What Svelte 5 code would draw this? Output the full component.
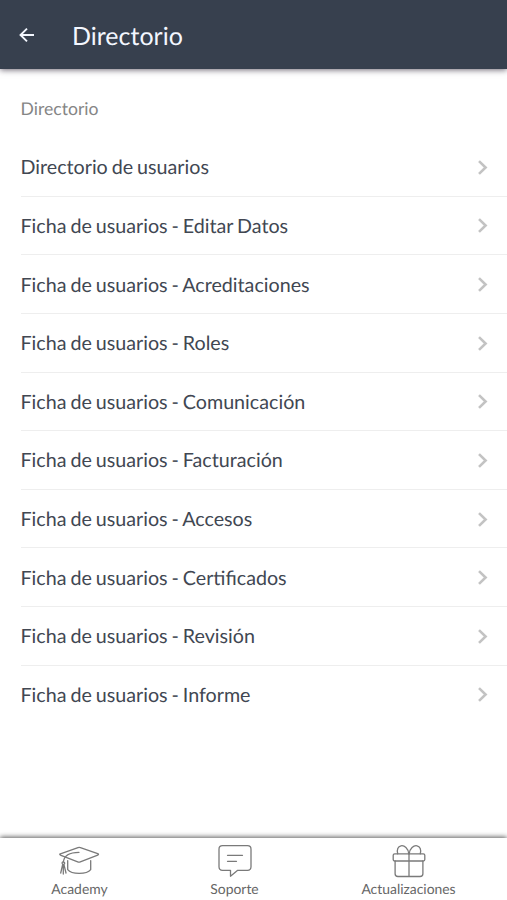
<script>
  const items = [
    'Directorio de usuarios',
    'Ficha de usuarios - Editar Datos',
    'Ficha de usuarios - Acreditaciones',
    'Ficha de usuarios - Roles',
    'Ficha de usuarios - Comunicación',
    'Ficha de usuarios - Facturación',
    'Ficha de usuarios - Accesos',
    'Ficha de usuarios - Certificados',
    'Ficha de usuarios - Revisión',
    'Ficha de usuarios - Informe'
  ];
</script>

<div class="app">
  <header>
    <svg class="back" width="16" height="16" viewBox="0 0 16 16" aria-hidden="true">
      <path d="M15 8H1.6M8 1.6L1.5 8l6.5 6.4" />
    </svg>
    <h1>Directorio</h1>
  </header>

  <main>
    <h2>Directorio</h2>
    <ul>
      {#each items as item}
        <li>
          <span>{item}</span>
          <svg class="chevron" width="12" height="16" viewBox="0 0 12 16" aria-hidden="true">
            <path d="M2 2.1L8.600 8.500 2 14.900" />
          </svg>
        </li>
      {/each}
    </ul>
  </main>

  <nav>
    <a href="#academy">
      <svg width="42" height="34" viewBox="0 0 42 34" aria-hidden="true">
        <path d="M1.700 10.200L20 3.600q1.200-.4 2.400 0L39.700 9.600q1.600.7 0 1.600L22.300 17.900q-1.300.5-2.600 0L3 11.400q-1.500-.7-1.300-1.200z" />
        <path d="M21 8.300C13 8.400 6.200 11 5.300 17.800M9.700 16.600v9c4 5 19 5 23 0v-9" />
        <path d="M5.300 17.800c-1.500.1-1.700 2-.3 2.500h.9c1.300-.6.900-2.500-.6-2.500zM4.700 20.400L2.700 29M5.300 20.400V30M5.900 20.400L8 29" />
      </svg>
      <span>Academy</span>
    </a>
    <a href="#soporte">
      <svg width="42" height="34" viewBox="0 0 42 34" aria-hidden="true">
        <path d="M8.500 1.700h25q3.500 0 3.500 3.500v17.600q0 3.500-3.500 3.500H23.700l-7.200 5.900v-5.900h-8Q5 26.300 5 22.800V5.200q0-3.500 3.500-3.500z" />
        <path d="M13.500 11.300h15M13.500 17.300h9" />
      </svg>
      <span>Soporte</span>
    </a>
    <a href="#actualizaciones">
      <svg width="42" height="34" viewBox="0 0 42 34" aria-hidden="true">
        <rect x="5.200" y="9.800" width="31.600" height="7.200" rx="1.500" />
        <path d="M7.100 17v12.700q0 2.800 2.800 2.800h22.200q2.800 0 2.800-2.800V17M21 9.800v22.700" />
        <path d="M20.700 9.800C20.400 4 16.200 1.200 13 1.800 9.900 2.400 8.600 6 9.700 9.800M21.300 9.800C21.600 4 25.800 1.200 29 1.800c3.100.6 4.400 4.200 3.300 8" />
      </svg>
      <span>Actualizaciones</span>
    </a>
  </nav>
</div>

<style>
  .app {
    height: 900px;
    display: flex;
    flex-direction: column;
    overflow: hidden;
    background: #fff;
    color: #414752;
    font-family: Lato, sans-serif;
    text-rendering: geometricPrecision;
  }
  header {
    flex: none;
    height: 69px;
    box-sizing: border-box;
    display: flex;
    align-items: center;
    gap: 37px;
    padding: 0 19px;
    background: #37404e;
    color: #f3f7ff;
    box-shadow: 0 1px 6px rgba(35, 25, 45, 0.65);
  }
  svg {
    fill: none;
    stroke: currentColor;
  }
  .back path {
    stroke-width: 1.9;
  }
  h1 {
    margin: 0;
    padding-top: 2px;
    font-size: 25px;
    font-weight: 400;
    line-height: 36px;
  }
  main {
    flex: 1;
    padding-left: 20.5px;
  }
  h2 {
    margin: 0;
    height: 69px;
    box-sizing: border-box;
    padding-top: 29px;
    font-size: 17.6px;
    font-weight: 400;
    line-height: 22px;
    color: #858585;
  }
  ul {
    list-style: none;
    margin: 0;
    padding: 0;
  }
  li {
    display: flex;
    align-items: center;
    justify-content: space-between;
    height: 58.64px;
    box-sizing: border-box;
    padding-right: 18px;
    border-bottom: 1px solid #eee;
    font-size: 19.7px;
    line-height: 28px;
    word-spacing: -1.1px;
  }
  li span {
    padding-top: 3px;
  }
  li:last-child {
    border-bottom-color: transparent;
  }
  .chevron {
    color: #c3c3c3;
  }
  .chevron path {
    stroke-width: 2.6;
  }
  nav {
    flex: none;
    height: 62px;
    box-sizing: border-box;
    display: flex;
    justify-content: space-around;
    padding-top: 6px;
    background: #fff;
    box-shadow: 0 -1px 5px rgba(0, 0, 0, 0.65);
  }
  nav a {
    display: flex;
    flex-direction: column;
    align-items: center;
    color: #666;
    text-decoration: none;
    font-size: 13.9px;
    line-height: 18px;
  }
  nav svg {
    stroke: #7a7a7a;
    stroke-width: 1.3;
    stroke-linejoin: round;
    stroke-linecap: round;
  }
  nav span {
    margin-top: 2px;
  }
</style>
